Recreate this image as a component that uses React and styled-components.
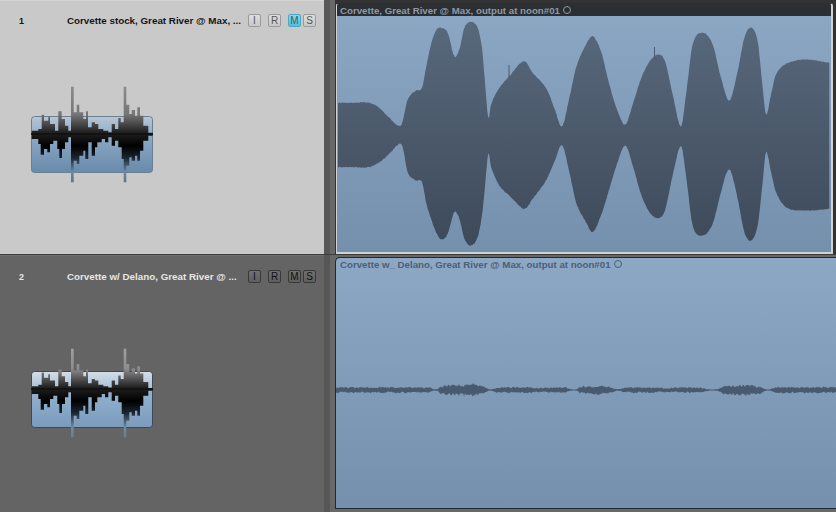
import styled, { createGlobalStyle } from "styled-components";

const GlobalStyle = createGlobalStyle`
  html, body {
    margin: 0;
    padding: 0;
    background: #666;
    overflow: hidden;
  }
`;

const Arrange = styled.div`
  width: 836px;
  height: 512px;
  display: flex;
  flex-direction: column;
  font-family: "Liberation Sans", Arial, sans-serif;
`;

const Track = styled.div`
  display: grid;
  grid-template-columns: 324px 1fr;
  height: ${(p) => p.$height}px;
  box-sizing: border-box;
  border-top: ${(p) => (p.$first ? "0" : "1px solid #3c3c3c")};
`;

const TrackHeader = styled.div`
  display: flex;
  flex-direction: column;
  background: ${(p) => (p.$dim ? "#646464" : "#c9c9c9")};
  border-top: 1px solid ${(p) => (p.$dim ? "#6e6e6e" : "#d4d4d4")};
  color: ${(p) => (p.$dim ? "#e6e6e6" : "#151515")};
`;

const HeaderRow = styled.div`
  display: flex;
  align-items: center;
  height: 13px;
  margin-top: ${(p) => p.$top}px;
  padding-left: 19px;
`;

const TrackNumber = styled.span`
  width: 48px;
  font-size: 9px;
  font-weight: 700;
`;

const TrackName = styled.span`
  width: 181px;
  font-size: 9.8px;
  font-weight: 700;
  white-space: nowrap;
`;

const Buttons = styled.div`
  display: flex;
`;

const Btn = styled.span`
  box-sizing: border-box;
  width: 13px;
  height: 13px;
  margin-left: ${(p) => p.$gap}px;
  display: flex;
  align-items: center;
  justify-content: center;
  font-size: 10px;
  border-radius: 2px;
  border: 1px solid ${(p) => (p.$on ? "#4aa9c4" : p.$dim ? "#383838" : "#9a9a9a")};
  background: ${(p) =>
    p.$on
      ? "linear-gradient(#7fdcf2, #4fc0de)"
      : p.$dim
      ? "linear-gradient(#707070, #5e5e5e)"
      : "linear-gradient(#dedede, #c8c8c8)"};
  color: ${(p) => (p.$dim ? "#111" : "#555")};
`;

const ThumbWrap = styled.div`
  margin-top: ${(p) => p.$top}px;
  margin-left: 30px;
  line-height: 0;
`;

const Lane = styled.div`
  display: flex;
  min-width: 0;
  padding: ${(p) => p.$pad};
  background: linear-gradient(
    90deg,
    #565656 6px,
    #686868 6px,
    #686868 11px,
    ${(p) => (p.$selected ? "#333" : "#686868")} 11px
  );
`;

const Region = styled.div`
  flex: 1;
  min-width: 0;
  display: flex;
  flex-direction: column;
  overflow: hidden;
  box-sizing: border-box;
  background: linear-gradient(#8ca8c5, #7590ac);
  ${(p) =>
    p.$selected
      ? `
    border: solid #d2d2d2;
    border-width: 1px 2px 2px 1px;
    border-top-color: #2b2f33;
    border-radius: 3px 3px 0 0;
  `
      : `
    border: solid #1f2a36;
    border-width: 1px 0 1px 1px;
    border-radius: 5px 0 0 0;
  `}
`;

const RegionTitle = styled.div`
  flex: none;
  display: flex;
  align-items: center;
  height: 12px;
  padding-left: ${(p) => (p.$selected ? 3 : 4)}px;
  font-size: 9.7px;
  font-weight: 700;
  white-space: nowrap;
  background: ${(p) => (p.$selected ? "#2b2f33" : "transparent")};
  color: ${(p) => (p.$selected ? "#8f9aa4" : "#4c6078")};
`;

const LoopMark = styled.span`
  box-sizing: border-box;
  width: 8px;
  height: 8px;
  margin-left: 3px;
  border-radius: 50%;
  border: 1.3px solid currentColor;
`;

const WaveBox = styled.div`
  flex: 1;
  min-height: 0;
  line-height: 0;
`;

// thumbnail silhouette as steps: [end x, y], coords read off the 3x crop of the reference
const THUMB_TOP = [
  [55, 150], [65, 145], [72, 102], [85, 120], [90, 108], [105, 130], [115, 150], [125, 92], [135, 115],
  [145, 135], [153, 150], [161, 18], [170, 95], [178, 72], [190, 95], [198, 115], [204, 92], [215, 140],
  [225, 125], [235, 130], [250, 145], [265, 150], [275, 155], [285, 130], [295, 145], [302, 112],
  [311, 125], [319, 18], [328, 72], [335, 100], [345, 88], [352, 105], [360, 80], [370, 105], [385, 135],
  [398, 156],
];

const THUMB_BOTTOM = [
  [55, 175], [62, 190], [72, 222], [82, 205], [90, 215], [100, 190], [112, 180], [118, 205], [126, 232],
  [135, 205], [145, 185], [153, 170], [161, 305], [170, 240], [178, 250], [190, 225], [196, 210],
  [205, 235], [215, 185], [225, 225], [232, 200], [245, 185], [255, 175], [265, 185], [275, 170],
  [285, 195], [295, 180], [305, 200], [311, 235], [319, 305], [328, 255], [335, 230], [345, 240],
  [352, 225], [360, 240], [370, 210], [385, 180], [398, 165],
];

const silhouette = (scale) => {
  const mid = 48;
  const toY = (zy) => mid + ((zy - 160) / 3) * (zy < 160 ? scale : 1);
  const toX = (zx) => (zx - 30) / 3;
  let d = `M1.7 ${mid}`;
  THUMB_TOP.forEach(([x, y]) => {
    d += `V${toY(y).toFixed(1)}H${toX(x).toFixed(1)}`;
  });
  [...THUMB_BOTTOM].reverse().forEach(([x, y], i, list) => {
    const prev = i + 1 < list.length ? list[i + 1][0] : 35;
    d += `V${toY(y).toFixed(1)}H${toX(prev).toFixed(1)}`;
  });
  return `${d}Z`;
};

const Thumbnail = ({ id, light }) => (
  <svg width="126" height="100" viewBox="0 0 126 100">
    <defs>
      <linearGradient id={`${id}-up`} x1="0" y1="0" x2="0" y2="1">
        <stop offset="0" stopColor={light ? "#d3dde8" : "#b6c6d6"} />
        <stop offset="1" stopColor={light ? "#a9c0d6" : "#93aec8"} />
      </linearGradient>
      <linearGradient id={`${id}-down`} x1="0" y1="0" x2="0" y2="1">
        <stop offset="0" stopColor={light ? "#94b3d0" : "#8fabc6"} />
        <stop offset="1" stopColor={light ? "#7b9bbd" : "#688aab"} />
      </linearGradient>
      <linearGradient id={`${id}-bar`} gradientUnits="userSpaceOnUse" x1="0" y1="0" x2="0" y2="100">
        <stop offset="0" stopColor={light ? "#a8a8a8" : "#8a8a8a"} />
        <stop offset="0.28" stopColor={light ? "#8c8c8c" : "#777"} />
        <stop offset="0.46" stopColor="#222" />
        <stop offset="0.6" stopColor="#000" />
        <stop offset="0.72" stopColor="#1c2630" />
        <stop offset="0.86" stopColor="#6a8aa8" />
        <stop offset="1" stopColor={light ? "#777" : "#5a6a78"} />
      </linearGradient>
    </defs>
    <path d="M1.5 33.5a3 3 0 0 1 3-3h115a3 3 0 0 1 3 3V48H1.5z" fill={`url(#${id}-up)`} />
    <path d="M1.5 48h121v35.5a3 3 0 0 1-3 3h-115a3 3 0 0 1-3-3z" fill={`url(#${id}-down)`} />
    <rect x="1.5" y="30.5" width="121" height="56" rx="3" fill="none" stroke={light ? "#3f4a55" : "#6b7f93"} />
    <path d={silhouette(light ? 0.85 : 1)} fill={`url(#${id}-bar)`} />
    <rect x="1" y="47.2" width="122" height="1.6" fill="#111" />
  </svg>
);

const WAVE_ONE = [
  // left half, [zoomX, top, bottom] in the crop at (336,15)
  [6, 265, 455], [50, 265, 455], [100, 265, 455], [130, 280, 440], [160, 310, 415], [190, 335, 385], [200, 320, 395],
  [215, 255, 470], [240, 228, 495], [258, 220, 500], [270, 160, 560], [285, 90, 610], [300, 48, 650],
  [315, 40, 672], [335, 55, 655], [355, 125, 590], [370, 105, 610], [385, 40, 670], [405, 22, 690],
  [425, 40, 665], [438, 100, 600], [445, 180, 535], [457, 310, 415], [465, 270, 455], [490, 220, 510],
  [520, 185, 540], [565, 140, 580], [590, 175, 550], [630, 220, 495], [655, 280, 440], [678, 335, 390],
  [700, 250, 470], [720, 160, 560],
  // right half, crop at (586,15), so 750 added to x
  [750, 90, 620], [770, 65, 650], [795, 110, 600], [820, 210, 520], [845, 290, 440], [868, 330, 390],
  [890, 270, 450], [920, 180, 550], [955, 125, 605], [985, 135, 590], [1010, 240, 480], [1035, 335, 392],
  [1050, 240, 480], [1070, 90, 630], [1100, 55, 660], [1130, 90, 625], [1155, 190, 530], [1180, 258, 462],
  [1205, 170, 550], [1225, 70, 650], [1245, 40, 675], [1265, 80, 630], [1280, 220, 500], [1290, 300, 410],
  [1305, 240, 470], [1320, 180, 530], [1350, 148, 575], [1410, 135, 585], [1480, 145, 580],
];

const WAVE_TWO = [
  [0, 8], [280, 8], [292, 3], [305, 3], [315, 12], [350, 15], [415, 18], [445, 10], [458, 3], [470, 3],
  [480, 8], [560, 9], [570, 11], [600, 7], [690, 8], [702, 3], [722, 3], [735, 10], [780, 13], [825, 9],
  [840, 3], [855, 3], [865, 8], [1000, 7], [1100, 8], [1112, 3], [1145, 3], [1160, 12], [1215, 16],
  [1275, 10], [1290, 3], [1305, 3], [1320, 9], [1400, 9], [1500, 9],
];

// catmull-rom through the envelope points, keeps the lobes round
const curve = (pts, x, i) => {
  let k = 1;
  while (k < pts.length - 1 && x > pts[k][0]) k++;
  const p1 = pts[k - 1];
  const p2 = pts[k];
  const p0 = pts[k - 2] || p1;
  const p3 = pts[k + 1] || p2;
  const t = Math.min(1, Math.max(0, (x - p1[0]) / (p2[0] - p1[0] || 1)));
  const m1 = ((p2[i] - p0[i]) / (p2[0] - p0[0] || 1)) * (p2[0] - p1[0]);
  const m2 = ((p3[i] - p1[i]) / (p3[0] - p1[0] || 1)) * (p2[0] - p1[0]);
  const t2 = t * t;
  const t3 = t2 * t;
  return (2 * t3 - 3 * t2 + 1) * p1[i] + (t3 - 2 * t2 + t) * m1 + (-2 * t3 + 3 * t2) * p2[i] + (t3 - t2) * m2;
};

const noise = (seed) => {
  let s = seed;
  return () => {
    s = (s * 16807) % 2147483647;
    return s / 2147483647;
  };
};

const buildWaveOne = () => {
  const rnd = noise(4711);
  const up = [];
  const down = [];
  for (let x = 6; x <= 1480; x += 2) {
    const px = (x / 3).toFixed(1);
    up.push(`${px},${(curve(WAVE_ONE, x, 1) / 3 - rnd() * 0.9).toFixed(1)}`);
    down.unshift(`${px},${(curve(WAVE_ONE, x, 2) / 3 + rnd() * 0.9).toFixed(1)}`);
  }
  return [...up, ...down].join(" ");
};

const buildWaveTwo = (mid) => {
  const rnd = noise(91);
  const up = [];
  const down = [];
  for (let x = 0; x <= 1500; x += 3) {
    const h = curve(WAVE_TWO, x, 1) / 3;
    const px = (x / 3).toFixed(1);
    up.push(`${px},${(mid - h * (0.55 + rnd() * 0.6)).toFixed(1)}`);
    down.unshift(`${px},${(mid + h * (0.55 + rnd() * 0.6)).toFixed(1)}`);
  }
  return [...up, ...down].join(" ");
};

const WaveOne = () => (
  <svg width="496" height="236" viewBox="1 1 496 236">
    <defs>
      <linearGradient id="wave-one" gradientUnits="userSpaceOnUse" x1="0" y1="0" x2="0" y2="235">
        <stop offset="0" stopColor="#596a7d" />
        <stop offset="1" stopColor="#3d4959" />
      </linearGradient>
    </defs>
    <polygon points={buildWaveOne()} fill="url(#wave-one)" />
    <rect x="172.5" y="50" width="1" height="14" fill="#4c5c6e" />
    <rect x="318" y="32" width="1" height="12" fill="#4c5c6e" />
  </svg>
);

const WaveTwo = () => (
  <svg width="500" height="238" viewBox="0 0 500 238">
    <polygon points={buildWaveTwo(120)} fill="#4a5a6e" />
  </svg>
);

const TrackSide = ({ number, name, dim, id, rowTop, thumbTop }) => (
  <TrackHeader $dim={dim}>
    <HeaderRow $top={rowTop}>
      <TrackNumber>{number}</TrackNumber>
      <TrackName>{name}</TrackName>
      <Buttons>
        <Btn $dim={dim} $gap={0}>I</Btn>
        <Btn $dim={dim} $gap={7}>R</Btn>
        <Btn $dim={dim} $gap={7} $on={!dim}>M</Btn>
        <Btn $dim={dim} $gap={2}>S</Btn>
      </Buttons>
    </HeaderRow>
    <ThumbWrap $top={thumbTop}>
      <Thumbnail id={id} light={dim} />
    </ThumbWrap>
  </TrackHeader>
);

export default function App() {
  return (
    <>
      <GlobalStyle />
      <Arrange>
        <Track $first $height={254}>
          <TrackSide
            number="1"
            name="Corvette stock, Great River @ Max, ..."
            id="thumb-one"
            rowTop={13}
            thumbTop={59}
          />
          <Lane $selected $pad="3px 3px 1px 12px">
            <Region $selected>
              <RegionTitle $selected>
                Corvette, Great River @ Max, output at noon#01
                <LoopMark />
              </RegionTitle>
              <WaveBox>
                <WaveOne />
              </WaveBox>
            </Region>
          </Lane>
        </Track>
        <Track $height={258}>
          <TrackSide
            number="2"
            name="Corvette w/ Delano, Great River @ ..."
            dim
            id="thumb-two"
            rowTop={14}
            thumbTop={58}
          />
          <Lane $pad="2px 0 3px 11px">
            <Region>
              <RegionTitle>
                Corvette w_ Delano, Great River @ Max, output at noon#01
                <LoopMark />
              </RegionTitle>
              <WaveBox>
                <WaveTwo />
              </WaveBox>
            </Region>
          </Lane>
        </Track>
      </Arrange>
    </>
  );
}
